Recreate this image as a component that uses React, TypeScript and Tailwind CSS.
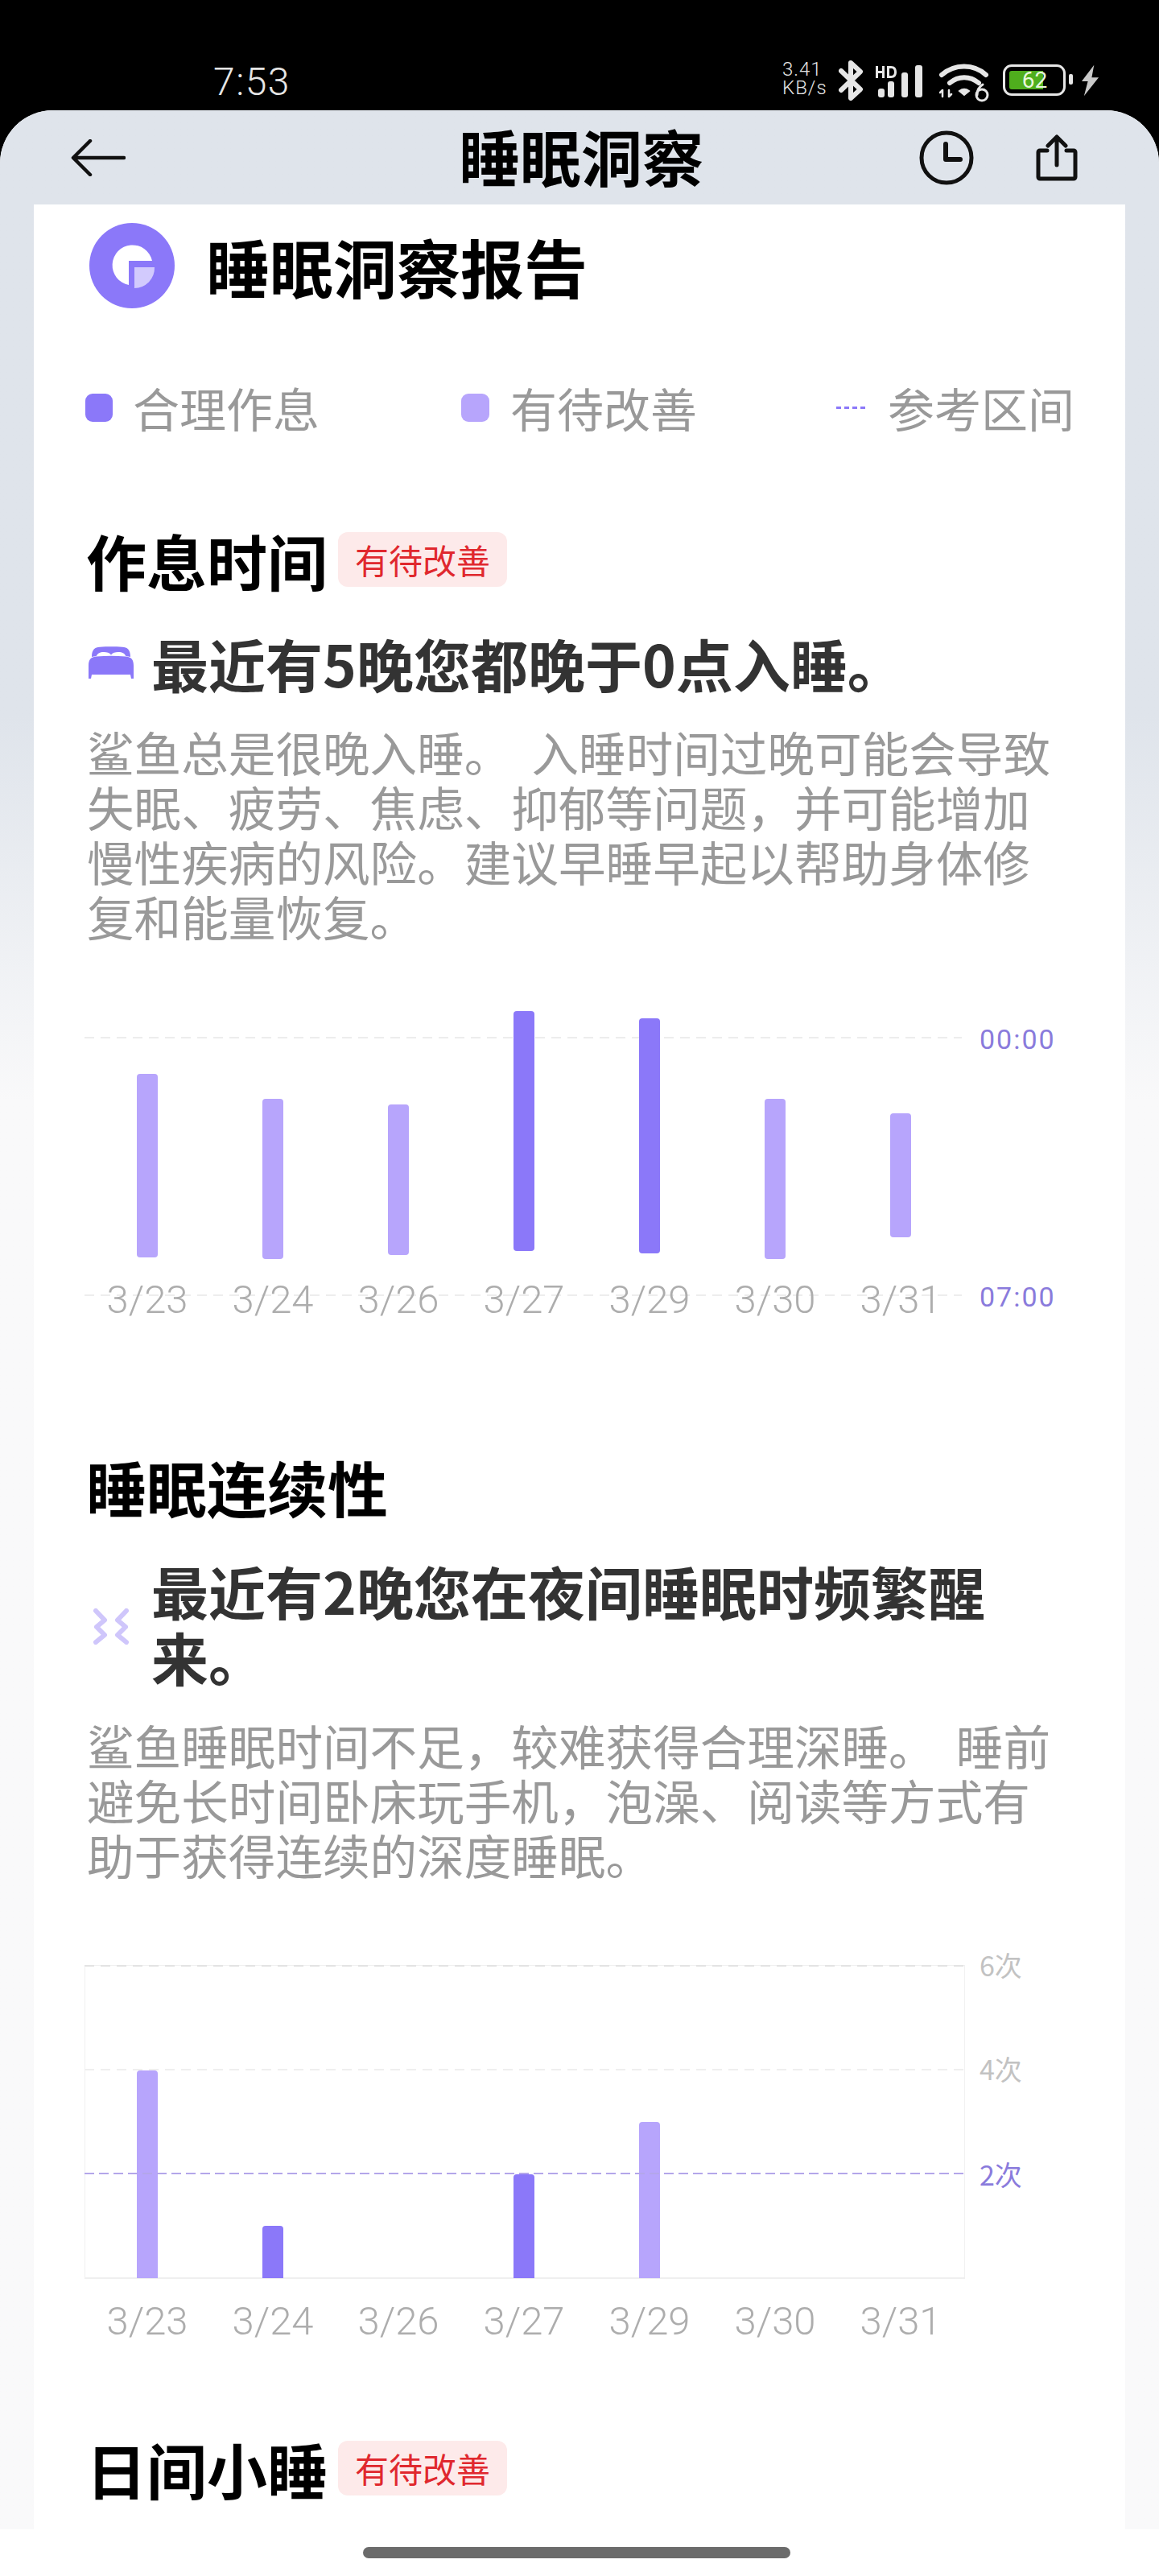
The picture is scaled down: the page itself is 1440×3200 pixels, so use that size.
import React from "react";

const cjk = "font-['Noto_Sans_CJK_SC','Noto_Sans',sans-serif]";

const dates = ["3/23", "3/24", "3/26", "3/27", "3/29", "3/30", "3/31"];

// bars of the bedtime chart, y values relative to the chart top (page y 1240)
const bedtime = [
  { top: 93, bottom: 321, dark: false },
  { top: 124, bottom: 323, dark: false },
  { top: 131, bottom: 318, dark: false },
  { top: 15, bottom: 313, dark: true },
  { top: 24, bottom: 316, dark: true },
  { top: 124, bottom: 323, dark: false },
  { top: 142, bottom: 296, dark: false },
];

// wake counts, one unit is 64.5px
const wakes = [
  { h: 258, dark: false },
  { h: 65, dark: true },
  { h: 0, dark: true },
  { h: 129, dark: true },
  { h: 194, dark: false },
  { h: 0, dark: true },
  { h: 0, dark: true },
];

function Badge() {
  return (
    <span className="ml-[13px] flex h-[68px] w-[210px] items-center justify-center rounded-[12px] bg-[#fdeaea] text-[42px] leading-none text-[#e0282e]">
      有待改善
    </span>
  );
}

function SectionTitle({ title, badge }: { title: string; badge?: boolean }) {
  return (
    <div className="flex h-[72px] items-center">
      <h2 className="-ml-[1px] text-[75px] font-bold leading-none text-black">{title}</h2>
      {badge && <Badge />}
    </div>
  );
}

function DateLabels() {
  return (
    <div className="flex w-[1092px] font-['Roboto',sans-serif] text-[49px] font-light leading-none text-[#adadad]">
      {dates.map((d) => (
        <span key={d} className="w-[156px] text-center">
          {d}
        </span>
      ))}
    </div>
  );
}

function BedIcon() {
  return (
    <svg viewBox="0 0 56 40" className="h-[40px] w-[56px]" fill="#8b78f9">
      <path d="M4 13C4 4 8 1 14 .8 23 .2 33 .2 42 .8c6 .2 10 3.2 10 12.200l-6-1.200c-1-3-4-4.800-9-4.800-4 0-7 1-9 3.400-2-2.400-5-3.400-9-3.400-5 0-8 1.800-9 4.800z" />
      <path d="M0 24C0 16 3 13 10 12.500c12-1 24-1 36 0 7 .5 10 3.500 10 11.500v16h-3l-1-5H4l-1 5H0z" />
    </svg>
  );
}

function WakeIcon() {
  return (
    <svg
      viewBox="0 0 44 45"
      className="mt-[8px] h-[45px] w-[44px]"
      fill="none"
      stroke="#cfc6fb"
      strokeWidth="6"
      strokeLinecap="round"
      strokeLinejoin="round"
    >
      <path d="M3 3l11 11.500L4 23l10 10-11 9" />
      <path d="M41 3L30 14.500 40 23 30 33l11 9" />
    </svg>
  );
}

function StatusBar() {
  return (
    <div className="flex h-[137px] items-start bg-black text-[#e6e6e6]">
      <span className="ml-[265px] mt-[76px] font-['Roboto',sans-serif] text-[48px] font-light leading-[52px] tracking-[1.5px]">
        7:53
      </span>
      <div className="ml-auto mr-[74px] mt-[75px] flex items-start">
        <div className="flex w-[54px] flex-col font-['Roboto',sans-serif] text-[24px] font-light leading-[23px] tracking-[1px]">
          <span>3.41</span>
          <span>KB/s</span>
        </div>
        <svg viewBox="0 0 30 50" className="ml-[16px] h-[50px] w-[30px]" fill="none" stroke="#e6e6e6" strokeWidth="6" strokeLinejoin="round" strokeLinecap="round">
          <path d="M3 13l24 23-12 11V3l12 11L3 37" />
        </svg>
        <svg viewBox="0 0 64 42" className="ml-[15px] mt-[5px] h-[42px] w-[64px]" fill="#e6e6e6">
          <path d="M1 2h3v6h5V2h3v15H9v-6H4v6H1zM15 2h5c5 0 7 3 7 7.500S25 17 20 17h-5zm3 3v9h2c3 0 4-2 4-4.500S23 5 20 5z" />
          <rect x="4" y="30" width="8" height="11" rx="3" />
          <rect x="16" y="21" width="8" height="20" rx="3" />
          <rect x="33" y="10" width="8" height="31" rx="3" />
          <rect x="50" y="1" width="9" height="40" rx="3" />
        </svg>
        <svg viewBox="0 0 62 50" className="ml-[16px] mt-[3px] h-[50px] w-[62px]" fill="none" stroke="#e6e6e6" strokeLinecap="round">
          <path d="M3 15C19 1 43 1 58 15" strokeWidth="6" />
          <path d="M13 25c11-9 25-9 36 0" strokeWidth="6" />
          <path d="M25 35c4-3 8-3 12 0l-6 5z" fill="#e6e6e6" strokeWidth="2" />
          <path d="M4 42v-8M4 34l-3 3M12 34v8M12 42l3-3" strokeWidth="2.500" />
          <circle cx="53" cy="40" r="7" strokeWidth="3" />
          <path d="M47 40c0-6 2-10 7-13" strokeWidth="3" />
        </svg>
        <div className="relative ml-[17px] mt-[5px] h-[39px] w-[78px] rounded-[11px] border-[3px] border-[#e6e6e6] p-[5px]">
          <div className="h-full w-[42px] rounded-l-[3px] bg-[#4fae1d]" />
          <span className="absolute inset-x-0 top-0 pl-[1px] text-center font-['Roboto',sans-serif] text-[28px] leading-[33px] text-[#e9f7dc]">
            62
          </span>
        </div>
        <div className="ml-[4px] mt-[17px] h-[13px] w-[5px] rounded-[2px] bg-[#e6e6e6]" />
        <svg viewBox="0 0 24 40" className="ml-[10px] mt-[5px] h-[40px] w-[23px]" fill="#c9c9c9">
          <path d="M17 0L1 21h8L4 40l19-24h-9z" />
        </svg>
      </div>
    </div>
  );
}

function Header() {
  return (
    <header className="relative flex h-[117px] items-center">
      <svg viewBox="0 0 68 46" className="ml-[88px] h-[46px] w-[68px]" fill="none" stroke="#111" strokeWidth="4.500" strokeLinecap="round" strokeLinejoin="round">
        <path d="M66 23H4M24 2L3 23l21 21" />
      </svg>
      <h1 className="absolute left-[570px] top-[20px] text-[76px] font-bold leading-[72px] text-black">睡眠洞察</h1>
      <svg viewBox="0 0 68 68" className="ml-auto h-[68px] w-[68px]" fill="none" stroke="#111" strokeWidth="5" strokeLinecap="round" strokeLinejoin="round">
        <circle cx="34" cy="34" r="31" />
        <path d="M33 17v19h18" strokeWidth="6" />
      </svg>
      <svg viewBox="0 0 52 58" className="ml-[77px] mr-[101px] h-[58px] w-[52px]" fill="none" stroke="#111" strokeWidth="5" strokeLinecap="round" strokeLinejoin="round">
        <path d="M14 20H5a2 2 0 0 0-2 2v31a2 2 0 0 0 2 2h42a2 2 0 0 0 2-2V22a2 2 0 0 0-2-2h-9" />
        <path d="M26 38V3M15 14L26 3l11 11" />
      </svg>
    </header>
  );
}

function BedtimeChart() {
  return (
    <div className="mt-[69px]">
      <div className="relative h-[400px]">
        <svg width="1092" height="400" viewBox="0 0 1092 400" className="-ml-[3px]">
          <line x1="0" x2="1090" y1="48" y2="48" stroke="#ededed" strokeWidth="2" strokeDasharray="12 8" />
          <line x1="0" x2="1090" y1="368" y2="368" stroke="#ededed" strokeWidth="2" strokeDasharray="12 8" />
          {bedtime.map((b, i) => (
            <rect
              key={i}
              x={78 + i * 156 - 13}
              y={b.top}
              width="26"
              height={b.bottom - b.top}
              rx="4"
              fill={b.dark ? "#8b78f9" : "#b7a5fc"}
            />
          ))}
        </svg>
        <div className="absolute left-[-3px] top-[349px]">
          <DateLabels />
        </div>
        <span className="absolute left-[1109px] top-[30px] font-['Roboto',sans-serif] text-[34px] leading-[40px] tracking-[2px] text-[#8a7bdc]">00:00</span>
        <span className="absolute left-[1109px] top-[350px] font-['Roboto',sans-serif] text-[34px] leading-[40px] tracking-[2px] text-[#8a7bdc]">07:00</span>
      </div>
    </div>
  );
}

function WakeChart() {
  return (
    <div className="mt-[103px]">
      <div className="relative h-[390px]">
        <svg width="1095" height="390" viewBox="0 0 1095 390" className="-ml-[3px]">
          <rect x="0.500" y="0.500" width="1093" height="388" fill="none" stroke="#f1f1f1" strokeWidth="1" />
          <line x1="0" x2="1094" y1="1" y2="1" stroke="#e3e3e3" strokeWidth="2" strokeDasharray="12 8" />
          <line x1="0" x2="1094" y1="130" y2="130" stroke="#efefef" strokeWidth="2" strokeDasharray="12 8" />
          <line x1="0" x2="1094" y1="389" y2="389" stroke="#efefef" strokeWidth="2" />
          {wakes.map((w, i) =>
            w.h > 0 ? (
              <path
                key={i}
                d={`M${65 + i * 156} 389v${4 - w.h}q0-4 4-4h18q4 0 4 4v${w.h - 4}z`}
                fill={w.dark ? "#8b78f9" : "#b7a5fc"}
              />
            ) : null,
          )}
          <line x1="0" x2="1094" y1="259" y2="259" stroke="#b3a6ea" strokeWidth="2" strokeDasharray="12 6" />
        </svg>
        <span className="absolute left-[1109px] top-[-20px] text-[34px] leading-[40px] text-[#c2c2c2]">6次</span>
        <span className="absolute left-[1109px] top-[109px] text-[34px] leading-[40px] text-[#c2c2c2]">4次</span>
        <span className="absolute left-[1109px] top-[240px] text-[34px] leading-[40px] text-[#8a7bdc]">2次</span>
      </div>
      <div className="-ml-[3px] mt-[28px]">
        <DateLabels />
      </div>
    </div>
  );
}

export default function App() {
  return (
    <div className={`h-[3200px] w-[1440px] overflow-hidden bg-black ${cjk}`}>
      <StatusBar />
      <main className="flex h-[3063px] flex-col overflow-hidden rounded-t-[66px] bg-white">
        <div className="bg-gradient-to-b from-[#dfe4eb] from-[25%] to-[#f9f9fa] to-[41%]">
          <Header />
          <div className="mx-[42px] h-[2888px] overflow-hidden bg-white px-[66px]">
            {/* report heading */}
            <div className="mt-[23px] flex items-center">
              <svg viewBox="0 0 106 106" className="ml-[3px] h-[106px] w-[106px]">
                <circle cx="53" cy="53" r="53" fill="#8b78f9" />
                <path d="M49 77a25 25 0 1 1 29-30H49z" fill="#fff" />
                <path d="M56 55h25a25 25 0 0 1-25 26z" fill="#d2cafd" />
              </svg>
              <h1 className="ml-[39px] text-[79px] font-bold leading-none text-black">睡眠洞察报告</h1>
            </div>

            {/* legend */}
            <div className="-ml-[2px] mt-[96px] flex h-[54px] items-center whitespace-nowrap text-[58px] leading-none text-[#999]">
              <span className="h-[35px] w-[34px] shrink-0 rounded-[9px] bg-[#8b78f9]" />
              <span className="ml-[25px]">合理作息</span>
              <span className="ml-[176px] h-[35px] w-[35px] shrink-0 rounded-[9px] bg-[#b7a5fc]" />
              <span className="ml-[26px]">有待改善</span>
              <span className="ml-[173px] w-[36px] shrink-0 border-t-[3px] border-dashed border-[#8b78f9]" />
              <span className="ml-[28px]">参考区间</span>
            </div>

            {/* bedtime */}
            <section className="mt-[126px]">
              <SectionTitle title="作息时间" badge />
              <div className="mt-[51px] flex items-center">
                <span className="mr-[20px] flex w-[60px] shrink-0 justify-center">
                  <BedIcon />
                </span>
                <h3 className="text-[71px] font-bold leading-[82px] text-[#333]">最近有5晚您都晚于0点入睡。</h3>
              </div>
              <p className="mt-[36px] w-[1204px] text-[58.6px] leading-[68px] text-[#999] [word-spacing:12px]">
                鲨鱼总是很晚入睡。 入睡时间过晚可能会导致失眠、疲劳、焦虑、抑郁等问题，并可能增加慢性疾病的风险。建议早睡早起以帮助身体修复和能量恢复。
              </p>
              <BedtimeChart />
            </section>

            {/* continuity */}
            <section className="mt-[169px]">
              <SectionTitle title="睡眠连续性" />
              <div className="mt-[52px] flex items-center">
                <span className="mr-[20px] flex w-[60px] shrink-0 justify-center">
                  <WakeIcon />
                </span>
                <h3 className="text-[71px] font-bold leading-[82px] text-[#333]">最近有2晚您在夜间睡眠时频繁醒来。</h3>
              </div>
              <p className="mt-[36px] w-[1204px] text-[58.6px] leading-[68px] text-[#999] [word-spacing:12px]">
                鲨鱼睡眠时间不足，较难获得合理深睡。 睡前避免长时间卧床玩手机，泡澡、阅读等方式有助于获得连续的深度睡眠。
              </p>
              <WakeChart />
            </section>

            {/* naps */}
            <section className="mt-[122px]">
              <SectionTitle title="日间小睡" badge />
            </section>
          </div>
        </div>
        <div className="flex flex-1 items-center justify-center bg-white pr-[8px]">
          <div className="h-[14px] w-[531px] rounded-full bg-[#6b6b6b]" />
        </div>
      </main>
    </div>
  );
}
